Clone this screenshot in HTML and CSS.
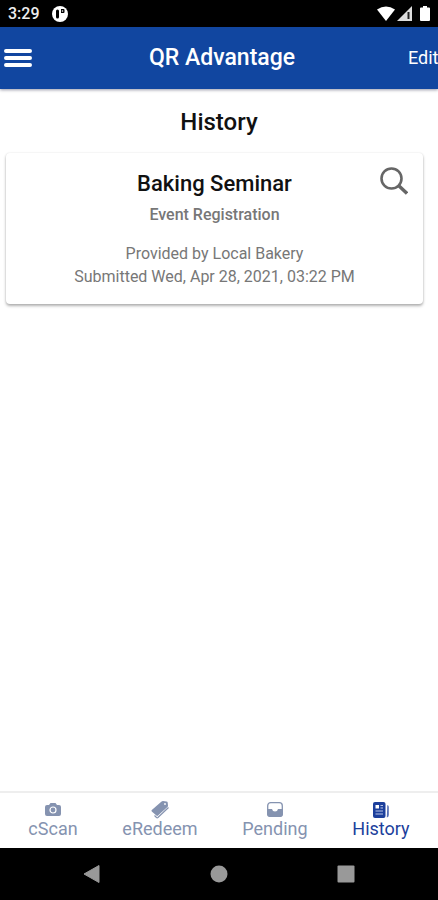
FILE: index.html
```html
<!DOCTYPE html>
<html lang="en">
<head>
  <meta charset="UTF-8" />
  <meta name="viewport" content="width=device-width, initial-scale=1" />
  <title>QR Advantage - History</title>
  <link rel="stylesheet" href="styles.css">
</head>
<body>
  <div class="status-bar">
    <span class="clock">3:29</span>
    <svg class="app-dot" viewBox="0 0 16 16" width="16" height="16">
      <circle cx="8" cy="8" r="8" fill="#fff" />
      <path d="M4 5q0-1.500 1.500-1.500T7 5v6q0 1.500-1.500 1.500T4 11z" fill="#000" />
      <path d="M9 3h2.500q1 0 1 1v2q0 1-1 1H9z" fill="#000" />
      <circle cx="10.500" cy="5" r=".8" fill="#fff" />
    </svg>
    <div class="status-icons">
      <svg viewBox="0 0 18 15" width="18" height="15"><path d="M0 3.500Q9-2.500 18 3.500L9 15z" fill="#fff" /></svg>
      <svg viewBox="0 0 15 15" width="15" height="15">
        <path d="M0 15L15 0v15z" fill="#ddd" />
        <path d="M11.500 6v7" stroke="#222" stroke-width="2" />
      </svg>
      <svg class="battery" viewBox="0 0 10 15" width="10" height="15"><path d="M3 0h4v1.500h2q1 0 1 1V14q0 1-1 1H1q-1 0-1-1V2.500q0-1 1-1h2z" fill="#fff" /></svg>
    </div>
  </div>

  <header class="header">
    <button class="menu" aria-label="Menu">
      <svg viewBox="0 0 28 20" width="28" height="20"><path d="M2 3h24M2 10h24M2 17h24" stroke="#fff" stroke-width="4" stroke-linecap="round" /></svg>
    </button>
    <h1>QR Advantage</h1>
    <button class="edit">Edit</button>
  </header>

  <main class="content">
    <h2>History</h2>
    <article class="card">
      <h3>Baking Seminar</h3>
      <p class="type">Event Registration</p>
      <p class="details">Provided by Local Bakery<br>Submitted Wed, Apr 28, 2021, 03:22 PM</p>
      <button class="search" aria-label="View details">
        <svg viewBox="0 0 28 28" width="28" height="28" fill="none" stroke="#666">
          <circle cx="11.500" cy="11.500" r="10" stroke-width="2.600" />
          <path d="M18.500 18.500L27 26.500" stroke-width="3.400" />
        </svg>
      </button>
    </article>
  </main>

  <nav class="tabs">
    <a href="#scan">
      <svg viewBox="0 0 18 18" width="18" height="18">
        <path d="M1 6q0-2 2-2h2l1.500-2h5L13 4h2q2 0 2 2v7q0 2-2 2H3q-2 0-2-2z" fill="currentColor" />
        <circle cx="9" cy="9" r="3" fill="none" stroke="#fff" stroke-width="1.200" />
      </svg>
      <span>cScan</span>
    </a>
    <a href="#redeem">
      <svg viewBox="0 0 18 18" width="18" height="18">
        <path d="M10 1Q11 0 12 0l3.500.5q1 0 1.200 1l.3 3q0 1-.6 1.600L7 14.500q-.8.800-1.600 0L.8 10.500q-.8-.8 0-1.600z" fill="currentColor" />
        <circle cx="14" cy="3" r=".9" fill="#fff" />
        <path d="M3.500 14.500l2 2q.7.600 1.400 0L17.500 6.500" fill="none" stroke="currentColor" stroke-width="1.200" />
      </svg>
      <span>eRedeem</span>
    </a>
    <a href="#pending">
      <svg viewBox="0 0 18 18" width="18" height="18">
        <rect x="1.700" y="1.700" width="14.600" height="13.600" rx="3" fill="#fff" stroke="currentColor" stroke-width="1.300" />
        <path d="M1 8h5q.5 2.500 3 2.500T12 8h5v5q0 3-3 3H4q-3 0-3-3z" fill="currentColor" />
      </svg>
      <span>Pending</span>
    </a>
    <a class="active" href="#history" aria-current="page">
      <svg viewBox="0 0 18 18" width="18" height="18">
        <rect x="1" y="1" width="12.500" height="16" rx="2" fill="currentColor" />
        <path d="M15.300 4q1.500.3 1.500 2v8q0 2-2 2.500z" fill="currentColor" opacity=".75" />
        <path d="M3.500 4H7v3.500H3.500z" fill="#fff" />
        <path d="M8.500 4.500H11M8.500 7H11M3.500 10H11M3.500 13H11" stroke="#b9c5e6" stroke-width="1.100" />
      </svg>
      <span>History</span>
    </a>
  </nav>

  <div class="system-nav">
    <button aria-label="Back"><svg viewBox="0 0 18 18" width="18" height="18"><path d="M1 9L16 .5v17z" fill="#999" stroke="#999" stroke-linejoin="round" /></svg></button>
    <button aria-label="Home"><svg viewBox="0 0 18 18" width="18" height="18"><circle cx="9" cy="9" r="8.500" fill="#999" /></svg></button>
    <button aria-label="Recent apps"><svg viewBox="0 0 18 18" width="18" height="18"><rect x=".5" y=".5" width="17" height="17" rx="1" fill="#999" /></svg></button>
  </div>
</body>
</html>
```
FILE: styles.css
```css
* {
  box-sizing: border-box;
}

body {
  margin: 0;
  min-height: 100vh;
  display: flex;
  flex-direction: column;
  font-family: Roboto, "Liberation Sans", sans-serif;
  background: #fff;
  color: #111;
  overflow-x: hidden;
}

h1, h2, h3, p {
  margin: 0;
}

svg {
  display: block;
}

button {
  padding: 0;
  border: none;
  background: none;
  font-family: inherit;
  cursor: pointer;
}

.status-bar {
  height: 27px;
  padding: 0 8px;
  display: flex;
  align-items: center;
  gap: 12px;
  background: #000;
  color: #eee;
}

.clock {
  font-size: 16px;
  line-height: 28px;
  font-weight: 500;
}

.status-icons {
  margin-left: auto;
  display: flex;
  gap: 2px;
}

.battery {
  margin-left: 6px;
}

.header {
  height: 62px;
  padding-left: 4px;
  display: grid;
  grid-template-columns: 32px 1fr 30px;
  align-items: center;
  background: #1146a0;
  color: #fff;
  box-shadow: 0 1px 3px rgb(0 0 40 / 0.4);
}

.header h1 {
  font-size: 23px;
  line-height: 28px;
  font-weight: 500;
  text-align: center;
}

/* the label runs up to the screen edge */
.edit {
  color: #fff;
  font-size: 18px;
  line-height: 28px;
  white-space: nowrap;
}

.content {
  flex: 1;
  padding: 18px 15px 18px 6px;
}

.content h2 {
  padding-left: 9px;
  margin-bottom: 16px;
  font-size: 24px;
  line-height: 30px;
  font-weight: 500;
  text-align: center;
}

.card {
  position: relative;
  padding: 16px;
  border-radius: 4px;
  background: #fff;
  text-align: center;
  box-shadow: 0 2px 3px rgb(0 0 0 / 0.3), 0 0 2px rgb(0 0 0 / 0.1);
}

.card h3 {
  font-size: 22px;
  line-height: 30px;
  font-weight: 500;
}

.type {
  margin-top: 4px;
  color: #777;
  font-size: 16px;
  line-height: 24px;
  font-weight: 500;
}

.details {
  margin-top: 15px;
  color: #777;
  font-size: 16px;
  line-height: 23px;
}

.search {
  position: absolute;
  top: 14px;
  right: 15px;
}

.tabs {
  height: 57px;
  padding: 8px 6px 0;
  display: flex;
  justify-content: space-around;
  border-top: 2px solid #eee;
  background: #fff;
}

.tabs a {
  padding: 0 4px;
  display: flex;
  flex-direction: column;
  align-items: center;
  color: #8593b0;
  font-size: 18px;
  line-height: 20px;
  text-decoration: none;
}

.tabs a.active {
  color: #1c3f9c;
}

.system-nav {
  height: 52px;
  padding: 0 29px;
  display: flex;
  justify-content: space-around;
  align-items: center;
  background: #000;
}
```
